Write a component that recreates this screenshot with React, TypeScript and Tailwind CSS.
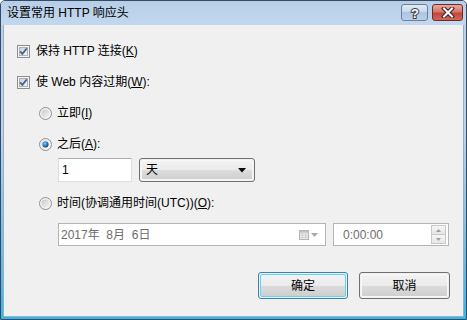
import React from "react";

const font = "font-['Liberation_Sans','Noto_Sans_CJK_SC',sans-serif]";

function CheckBox() {
  return (
    <svg width="13" height="13" viewBox="0 0 13 13" className="shrink-0">
      <defs>
        <linearGradient id="cbg" x1="0" y1="0" x2="1" y2="1">
          <stop offset="0" stopColor="#cbcfd5" />
          <stop offset="1" stopColor="#f7f7f7" />
        </linearGradient>
      </defs>
      <rect x="0.5" y="0.5" width="12" height="12" fill="#f4f4f4" stroke="#8e8f8f" />
      <rect x="2.5" y="2.5" width="8" height="8" fill="url(#cbg)" stroke="#aeb3b9" />
      <path d="M3.2 6.4 L5.4 8.9 L9.8 3.4" fill="none" stroke="#4a5f8e" strokeWidth="1.7" />
    </svg>
  );
}

function Radio({ on }: { on?: boolean }) {
  return (
    <svg width="13" height="13" viewBox="0 0 13 13" className="shrink-0">
      <defs>
        <linearGradient id="rg" x1="0" y1="0" x2="1" y2="1">
          <stop offset="0" stopColor="#c5c8cc" />
          <stop offset="1" stopColor="#f6f6f6" />
        </linearGradient>
        <radialGradient id="rd" cx="0.4" cy="0.35" r="0.7">
          <stop offset="0" stopColor="#8fd6fb" />
          <stop offset="0.5" stopColor="#2a7fc0" />
          <stop offset="1" stopColor="#0e3e6e" />
        </radialGradient>
      </defs>
      <circle cx="6.5" cy="6.5" r="6" fill="#f2f2f2" stroke="#8e8f8f" />
      <circle cx="6.5" cy="6.5" r="4" fill="url(#rg)" />
      {on && <circle cx="6.5" cy="6.5" r="3" fill="url(#rd)" />}
    </svg>
  );
}

function Btn({ label, primary }: { label: string; primary?: boolean }) {
  return (
    <div
      className={`h-[27px] rounded-[3px] border p-px ${
        primary ? "w-[90px] border-[#3c7fb1]" : "w-[91px] border-[#707070]"
      }`}
    >
      <div
        className={`h-full rounded-[2px] border flex items-center justify-center text-[12px] text-black bg-[linear-gradient(#f2f2f2_0%,#ebebeb_50%,#dddddd_50%,#cfcfcf_100%)] ${
          primary ? "border-[#5fd3f8]" : "border-[#f8f8f8]"
        }`}
      >
        {label}
      </div>
    </div>
  );
}

export default function App() {
  return (
    <div
      className={`${font} w-[467px] h-[320px] flex flex-col border border-[#3a4a5e] rounded-t-[5px] bg-[linear-gradient(#b9d1ea_0%,#bcd3ec_40%,#5fb9e6_85%,#2fb8e9_100%)] text-[12px] text-black overflow-hidden`}
    >
      <div className="h-[24px] shrink-0 flex justify-between pl-[6px] pr-[3px] bg-[linear-gradient(#b6cee8,#c3d8ef)]">
        <span className="self-center">设置常用 HTTP 响应头</span>
        <div className="flex gap-[4px] mt-[3px] h-[17px]">
          <div className="w-[27px] h-[17px] rounded-[3px] border border-[#6d7f95] bg-[linear-gradient(#e0eaf5_0%,#c5d7eb_50%,#aec6e1_50%,#b9cfe8_100%)] flex items-center justify-center">
            <svg width="12" height="14" viewBox="0 0 12 14">
              <text
                x="6"
                y="12"
                textAnchor="middle"
                fontSize="13"
                fontWeight="bold"
                fontFamily="Liberation Sans, sans-serif"
                fill="#ffffff"
                stroke="#3f3f3f"
                strokeWidth="2"
                paintOrder="stroke"
              >
                ?
              </text>
            </svg>
          </div>
          <div className="w-[31px] h-[17px] rounded-[3px] border border-[#6e2a24] bg-[linear-gradient(#e9a99c_0%,#d47769_45%,#c2473a_55%,#d0685a_100%)] flex items-center justify-center">
            <svg width="14" height="11" viewBox="0 0 14 11">
              <path d="M3 1.5 L11 9.5 M11 1.5 L3 9.5" stroke="#3b2020" strokeWidth="4" strokeLinecap="square" />
              <path d="M3 1.5 L11 9.5 M11 1.5 L3 9.5" stroke="#ffffff" strokeWidth="2" strokeLinecap="square" />
            </svg>
          </div>
        </div>
      </div>

      <div className="flex-1 mx-[2px] mb-[2px] bg-[#f0f0f0] border border-t-0 border-[#98adc6] flex flex-col pl-[13px] pr-[13px] pt-[18px]">
        <div className="h-[16px] flex items-center gap-[6px]">
          <CheckBox />
          <span>
            保持 HTTP 连接(<span className="underline">K</span>)
          </span>
        </div>
        <div className="h-[16px] mt-[15px] flex items-center gap-[6px]">
          <CheckBox />
          <span>
            使 Web 内容过期(<span className="underline">W</span>):
          </span>
        </div>

        <div className="pl-[22px] flex flex-col">
          <div className="h-[16px] mt-[15px] flex items-center gap-[5px]">
            <Radio />
            <span>
              立即(<span className="underline">I</span>)
            </span>
          </div>
          <div className="h-[16px] mt-[15px] flex items-center gap-[5px]">
            <Radio on />
            <span>
              之后(<span className="underline">A</span>):
            </span>
          </div>
        </div>

        <div className="pl-[41px] mt-[6px] flex items-center gap-[7px]">
          <div className="w-[74px] h-[24px] bg-white border border-[#dbdfe6] border-t-[#abadb3] flex items-center pl-[3px]">
            1
          </div>
          <div className="w-[116px] h-[24px] rounded-[3px] border border-[#707070] p-px">
            <div className="h-full rounded-[2px] border border-[#f8f8f8] bg-[linear-gradient(#f2f2f2_0%,#ebebeb_50%,#dddddd_50%,#cfcfcf_100%)] flex items-center justify-between pl-[4px] pr-[6px]">
              <span>天</span>
              <svg width="8" height="5" viewBox="0 0 8 5">
                <path d="M0 0 H8 L4 4.5 Z" fill="#000" />
              </svg>
            </div>
          </div>
        </div>

        <div className="pl-[22px] h-[16px] mt-[13px] flex items-center gap-[5px]">
          <Radio />
          <span>
            时间(协调通用时间(UTC))(<span className="underline">O</span>):
          </span>
        </div>

        <div className="pl-[41px] mt-[12px] flex items-center gap-[7px]">
          <div className="w-[268px] h-[23px] bg-white border border-[#b5b5b5] flex items-center justify-between pl-[2px] pr-[7px] text-[#6d6d6d]">
            <span className="whitespace-pre">2017年  8月  6日</span>
            <div className="flex items-center gap-[2px]">
              <svg width="10" height="10" viewBox="0 0 10 10">
                <rect x="0.5" y="0.5" width="9" height="9" fill="#f4f4f4" stroke="#b0b0b0" />
                <path d="M0.5 3 H9.5 M0.5 5.2 H9.5 M0.5 7.4 H9.5 M3.3 3 V9.5 M6.6 3 V9.5" stroke="#c8c8c8" strokeWidth="0.8" />
                <rect x="0.5" y="0.5" width="9" height="2" fill="#c0c0c0" />
              </svg>
              <svg width="7" height="4" viewBox="0 0 7 4">
                <path d="M0 0 H7 L3.5 4 Z" fill="#a8a8a8" />
              </svg>
            </div>
          </div>
          <div className="w-[116px] h-[23px] bg-white border border-[#b5b5b5] flex items-center justify-between pl-[9px] pr-[2px] text-[#6d6d6d]">
            <span>0:00:00</span>
            <div className="flex flex-col w-[15px] h-[19px]">
              <div className="flex-1 border border-[#c8c8c8] bg-[linear-gradient(#f6f6f6,#e6e6e6)] flex items-center justify-center">
                <svg width="5" height="3" viewBox="0 0 5 3">
                  <path d="M0 3 H5 L2.5 0 Z" fill="#a0a0a0" />
                </svg>
              </div>
              <div className="flex-1 border border-t-0 border-[#c8c8c8] bg-[linear-gradient(#f6f6f6,#e6e6e6)] flex items-center justify-center">
                <svg width="5" height="3" viewBox="0 0 5 3">
                  <path d="M0 0 H5 L2.5 3 Z" fill="#a0a0a0" />
                </svg>
              </div>
            </div>
          </div>
        </div>

        <div className="mt-[26px] flex justify-end gap-[11px]">
          <Btn label="确定" primary />
          <Btn label="取消" />
        </div>
      </div>
    </div>
  );
}
